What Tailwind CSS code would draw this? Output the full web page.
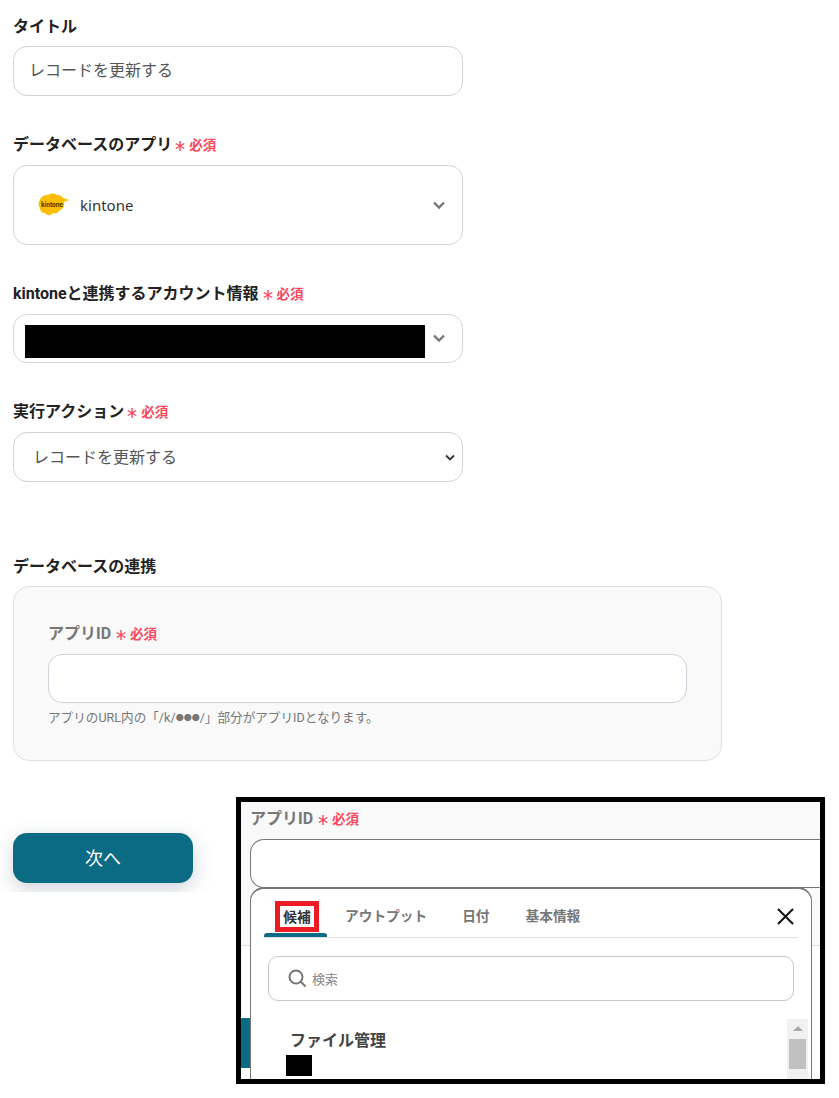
<!DOCTYPE html>
<html lang="ja">
<head>
    <meta charset="UTF-8">
    <title>レコードを更新する</title>
    <script src="https://cdn.jsdelivr.net/npm/@tailwindcss/browser@4"></script>
</head>
<body class="bg-white font-['Roboto','Noto_Sans_CJK_JP',sans-serif] text-[#222]">
<div class="relative w-[839px] h-[1098px] overflow-hidden">
    <main class="pl-[13px] pt-[16px]">
        <!-- タイトル -->
        <label class="block h-[22px] leading-[22px] text-base font-bold">タイトル</label>
        <div class="mt-[8px] w-[450px] h-[50px] flex items-center pl-[15px] bg-white border border-[#d2d3d8] rounded-[14px] text-base text-[#555]">レコードを更新する</div>

        <!-- アプリ -->
        <div class="mt-[37px] h-[22px] pt-[2px] flex items-center text-base font-bold">
            データベースのアプリ
            <span class="ml-[3px] text-[#f9475e] text-[13.5px] flex items-center"><svg class="mt-[2px] mr-[4px]" width="10" height="10" viewBox="0 0 10 10" fill="none" stroke="#f9475e" stroke-width="1.4"><path d="M5 0 V10 M0.7 2.5 L9.3 7.5 M9.3 2.5 L0.7 7.5"/></svg>必須</span>
        </div>
        <div class="mt-[10px] w-[450px] h-[80px] flex items-center justify-between pl-[24px] pr-[16px] border border-[#d2d3d8] rounded-[14px]">
            <div class="flex items-center gap-[11px]">
                <svg width="31" height="24" viewBox="0 0 31 24">
                    <path d="M2 7 C3 3 7 2 10 2 C12 0 17 0 19 2 C22 2 24 3 25 5 L31 7 L26 9 C27 13 25 16 22 17 C20 20 17 21 15 20 C13 23 9 23 7 20 C4 20 2 18 2 15 C0 13 0 9 2 7 Z" fill="#fdbd00"/>
                    <text x="14" y="13.5" text-anchor="middle" font-size="6.5" font-weight="700" fill="#4a3a00" font-family="Roboto, sans-serif">kintone</text>
                </svg>
                <span class="text-[15px] text-[#333] font-['Noto_Sans',sans-serif]">kintone</span>
            </div>
            <svg width="14" height="9" viewBox="0 0 14 9" fill="none" stroke="#777" stroke-width="2.4"><path d="M2 1.5 L7 6.5 L12 1.5"/></svg>
        </div>

        <!-- アカウント -->
        <div class="mt-[37px] h-[22px] pt-[2px] flex items-center text-base font-bold">
            kintoneと連携するアカウント情報
            <span class="ml-[4px] text-[#f9475e] text-[13.5px] flex items-center"><svg class="mt-[2px] mr-[4px]" width="10" height="10" viewBox="0 0 10 10" fill="none" stroke="#f9475e" stroke-width="1.4"><path d="M5 0 V10 M0.7 2.5 L9.3 7.5 M9.3 2.5 L0.7 7.5"/></svg>必須</span>
        </div>
        <div class="mt-[10px] w-[450px] h-[49px] flex items-center justify-between pl-[11px] pr-[16px] border border-[#d2d5dc] rounded-[14px]">
            <div class="mt-[6px] w-[400px] h-[33px] bg-black"></div>
            <svg width="14" height="9" viewBox="0 0 14 9" fill="none" stroke="#777" stroke-width="2.4"><path d="M2 1.5 L7 6.5 L12 1.5"/></svg>
        </div>

        <!-- 実行アクション -->
        <div class="mt-[37px] h-[22px] pt-[2px] flex items-center text-base font-bold">
            実行アクション
            <span class="ml-[3px] text-[#f9475e] text-[13.5px] flex items-center"><svg class="mt-[2px] mr-[4px]" width="10" height="10" viewBox="0 0 10 10" fill="none" stroke="#f9475e" stroke-width="1.4"><path d="M5 0 V10 M0.7 2.5 L9.3 7.5 M9.3 2.5 L0.7 7.5"/></svg>必須</span>
        </div>
        <div class="mt-[10px] w-[450px] h-[50px] flex items-center justify-between pl-[19px] pr-[7px] pt-[1px] border border-[#d2d3d8] rounded-[14px] text-base text-[#555]">
            レコードを更新する
            <svg width="10" height="7" viewBox="0 0 10 7" fill="none" stroke="#333" stroke-width="1.8"><path d="M1 1.5 L5 5.5 L9 1.5"/></svg>
        </div>

        <!-- データベースの連携 -->
        <div class="mt-[74px] h-[22px] leading-[22px] text-base font-bold">データベースの連携</div>
        <section class="mt-[8px] w-[709px] h-[175px] px-[34px] pt-[35px] bg-[#f9f9fa] border border-[#dfe0e6] rounded-[16px]">
            <div class="h-[22px] pt-[2px] flex items-center text-base font-bold text-[#777]">
                アプリID
                <span class="ml-[5px] text-[#f9475e] text-[13.5px] flex items-center"><svg class="mt-[2px] mr-[4px]" width="10" height="10" viewBox="0 0 10 10" fill="none" stroke="#f9475e" stroke-width="1.4"><path d="M5 0 V10 M0.7 2.5 L9.3 7.5 M9.3 2.5 L0.7 7.5"/></svg>必須</span>
            </div>
            <div class="mt-[10px] w-[639px] h-[49px] bg-white border border-[#d0d2dc] rounded-[14px]"></div>
            <p class="mt-[6px] text-[12.6px] leading-[18px] text-[#777]">アプリのURL内の「/k/<span class="text-[8px] align-[1px]">●●●</span>/」部分がアプリIDとなります。</p>
        </section>

        <!-- 次へ -->
        <div class="mt-[52px] -ml-[13px] w-[236px] h-[79px] overflow-hidden pl-[13px] pt-[20px]">
            <button class="w-[180px] h-[50px] pt-[1px] bg-[#0b6a84] rounded-[14px] text-white text-lg shadow-[0_6px_20px_rgba(30,60,80,0.22)]">次へ</button>
        </div>
    </main>

    <!-- 貼り付けられた拡大図 -->
    <div class="absolute left-[236px] top-[797px] w-[589px] h-[287px] border-[5px] border-black bg-white overflow-hidden">
        <div class="h-[144px] bg-[#f9f9f9] border-b border-[#ddd] pl-[9px] pt-[5px]">
            <div class="h-[22px] pt-[2px] flex items-center text-base font-bold text-[#777]">
                アプリID
                <span class="ml-[5px] text-[#f9475e] text-[13.5px] flex items-center"><svg class="mt-[2px] mr-[4px]" width="10" height="10" viewBox="0 0 10 10" fill="none" stroke="#f9475e" stroke-width="1.4"><path d="M5 0 V10 M0.7 2.5 L9.3 7.5 M9.3 2.5 L0.7 7.5"/></svg>必須</span>
            </div>
            <div class="mt-[10px] h-[49px] bg-white border border-[#777] border-r-0 rounded-l-[14px]"></div>
        </div>
        <div class="absolute left-0 top-[216px] w-[9px] h-[50px] bg-[#0b6a84]"></div>

        <!-- ポップアップ -->
        <div class="absolute left-[9px] top-[85px] w-[562px] h-[200px] bg-white border border-[#777] border-t-2 rounded-t-[14px] px-[13px]">
            <div class="relative h-[49px] flex items-start border-b border-[#e2e2e2] text-[13.7px] font-bold text-[#777]">
                <div class="w-[63px] h-[48px] relative">
                    <span class="ml-[11px] mt-[12px] w-[44px] h-[31px] pt-[1px] border-[5px] border-[#ed1c24] flex items-center justify-center text-[#333]">候補</span>
                    <span class="absolute left-0 bottom-0 w-[63px] h-[4px] bg-[#0b6a84] rounded-t-[3px]"></span>
                </div>
                <span class="ml-[18px] mt-[17px] leading-[20px]">アウトプット</span>
                <span class="ml-[35px] mt-[17px] leading-[20px]">日付</span>
                <span class="ml-[36px] mt-[17px] leading-[20px]">基本情報</span>
                <svg class="absolute right-[4px] top-[19px]" width="17" height="17" viewBox="0 0 17 17" fill="none" stroke="#111" stroke-width="2"><path d="M1 1 L16 16 M16 1 L1 16"/></svg>
            </div>
            <div class="ml-[4px] mt-[18px] w-[526px] h-[45px] flex items-center pl-[19px] border border-[#c8c8c8] rounded-[10px]">
                <svg width="19" height="19" viewBox="0 0 19 19" fill="none" stroke="#777" stroke-width="2"><circle cx="8" cy="8" r="6.5"/><path d="M12.8 12.8 L17.5 17.5"/></svg>
                <span class="ml-[5px] pt-[3px] text-[13px] text-[#888]">検索</span>
            </div>
            <div class="relative">
                <div class="ml-[26px] mt-[28px] h-[24px] leading-[24px] text-base font-bold text-[#444]">ファイル管理</div>
                <div class="ml-[22px] mt-[2px] w-[26px] h-[21px] bg-black"></div>
                <div class="absolute -right-[10px] -top-[10px] w-[21px] h-[70px] bg-[#f1f1f1] flex flex-col items-center pt-[7px]">
                    <span class="w-0 h-0 border-x-[5px] border-x-transparent border-b-[5px] border-b-[#a8a8a8]"></span>
                    <span class="mt-[8px] w-[17px] h-[30px] bg-[#c1c1c1]"></span>
                </div>
            </div>
        </div>
    </div>
</div>
</body>
</html>
